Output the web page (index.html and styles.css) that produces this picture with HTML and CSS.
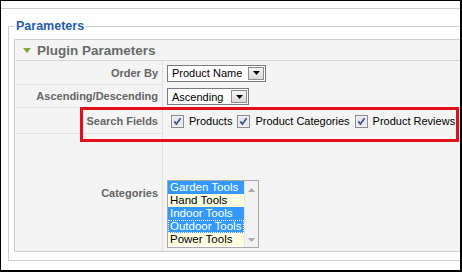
FILE: index.html
```html
<!DOCTYPE html>
<html>
<head>
<meta charset="utf-8">
<link rel="stylesheet" href="styles.css">
</head>
<body>
<div class="frame">
  <div class="topline"></div>
  <fieldset class="params">
    <legend>Parameters</legend>
    <div class="panel">
      <h3 class="panel-title"><span class="arrow"></span>Plugin Parameters</h3>
      <div class="paramlist">
        <div class="key k1">Order By</div>
        <div class="val">
          <div class="select sel-order">
            <span class="sel-text">Product Name</span>
            <span class="sel-btn"><svg width="7" height="4" viewBox="0 0 7 4"><path d="M0 0H7L3.5 4Z" fill="#000"/></svg></span>
          </div>
        </div>
        <div class="key k2">Ascending/Descending</div>
        <div class="val">
          <div class="select sel-dir">
            <span class="sel-text">Ascending</span>
            <span class="sel-btn"><svg width="7" height="4" viewBox="0 0 7 4"><path d="M0 0H7L3.5 4Z" fill="#000"/></svg></span>
          </div>
        </div>
        <div class="key k3">Search Fields</div>
        <div class="val checks">
          <label class="check"><svg class="cb" width="13" height="13" viewBox="0 0 13 13"><rect x="0.5" y="0.5" width="12" height="12" fill="#f2f2f2" stroke="#8b8b8b"/><rect x="2" y="2" width="9" height="9" fill="#e6e9ee"/><path d="M3.3 6.4L5.4 9L9.6 3.2" fill="none" stroke="#43558c" stroke-width="1.7"/></svg><span>Products</span></label>
          <label class="check"><svg class="cb" width="13" height="13" viewBox="0 0 13 13"><rect x="0.5" y="0.5" width="12" height="12" fill="#f2f2f2" stroke="#8b8b8b"/><rect x="2" y="2" width="9" height="9" fill="#e6e9ee"/><path d="M3.3 6.4L5.4 9L9.6 3.2" fill="none" stroke="#43558c" stroke-width="1.7"/></svg><span>Product Categories</span></label>
          <label class="check"><svg class="cb" width="13" height="13" viewBox="0 0 13 13"><rect x="0.5" y="0.5" width="12" height="12" fill="#f2f2f2" stroke="#8b8b8b"/><rect x="2" y="2" width="9" height="9" fill="#e6e9ee"/><path d="M3.3 6.4L5.4 9L9.6 3.2" fill="none" stroke="#43558c" stroke-width="1.7"/></svg><span>Product Reviews</span></label>
        </div>
        <div class="key k4">Categories</div>
        <div class="val list-cell">
          <div class="listbox">
            <ul class="options">
              <li class="sel">Garden Tools</li>
              <li>Hand Tools</li>
              <li class="sel">Indoor Tools</li>
              <li class="sel focus">Outdoor Tools</li>
              <li>Power Tools</li>
            </ul>
            <div class="scrollbar">
              <svg width="7" height="4" viewBox="0 0 7 4"><path d="M0 4H7L3.5 0Z" fill="#a8a8a8"/></svg>
              <svg width="7" height="4" viewBox="0 0 7 4"><path d="M0 0H7L3.5 4Z" fill="#a8a8a8"/></svg>
            </div>
          </div>
        </div>
      </div>
    </div>
  </fieldset>
  <div class="highlight"></div>
</div>
</body>
</html>
```
FILE: styles.css
```css
html, body {
  margin: 0;
  padding: 0;
  background: #ffffff;
}
.frame {
  position: relative;
  width: 462px;
  height: 272px;
  box-sizing: border-box;
  border-style: solid;
  border-color: #000;
  border-width: 1px 2px 2px 1px;
  overflow: hidden;
  background: #fff;
  font-family: "Liberation Sans", Arial, sans-serif;
}
.topline {
  height: 1px;
  margin-top: 7px;
  background: #cfcfcf;
}
.params {
  margin: 10px 0 0 7px;
  padding: 5px 0 8px 5px;
  border: 1px solid #cfcfcf;
  border-right: none;
  width: 520px;
  box-sizing: border-box;
  min-width: 0;
}
.params legend {
  padding: 0 2px;
  font-size: 12.5px;
  line-height: 15px;
  font-weight: bold;
  color: #1f5db3;
}
.panel {
  border: 1px solid #cfcfcf;
  border-right: none;
  background: #f4f4f4;
}
.panel-title {
  margin: 0;
  height: 20px;
  border-bottom: 1px solid #d6d6d6;
  display: flex;
  align-items: center;
  font-size: 13.5px;
  font-weight: bold;
  color: #6a6a6a;
}
.arrow {
  width: 0;
  height: 0;
  margin: 1px 6px 0 8px;
  border-left: 4px solid transparent;
  border-right: 4px solid transparent;
  border-top: 5px solid #7aa845;
}
.paramlist {
  display: grid;
  grid-template-columns: 148px 1fr;
  grid-template-rows: 24px 23px 26px 117px;
}
.key {
  box-sizing: border-box;
  border-right: 1px solid #e2e2e2;
  border-bottom: 1px solid #e2e2e2;
  display: flex;
  align-items: center;
  justify-content: flex-end;
  padding-right: 4px;
  font-size: 11px;
  font-weight: bold;
  color: #666;
}
.key.k4 {
  border-bottom: none;
}
.val {
  display: flex;
  align-items: center;
  padding-left: 4px;
}
.select {
  box-sizing: border-box;
  height: 17px;
  border: 1px solid #7a7a7a;
  background: #fff;
  display: flex;
  align-items: center;
  justify-content: space-between;
  padding: 0 1px 0 4px;
  font-size: 11px;
  color: #000;
}
.sel-order { width: 99px; }
.sel-dir { width: 82px; }
.sel-btn {
  box-sizing: border-box;
  width: 16px;
  height: 13px;
  border: 1px solid #8c8c8c;
  background: linear-gradient(#f4f4f4, #dcdcdc);
  display: flex;
  align-items: center;
  justify-content: center;
}
.checks {
  padding-left: 8px;
  gap: 5px;
  font-size: 11px;
  color: #000;
}
.check {
  display: flex;
  align-items: center;
  gap: 5px;
}
.cb {
  display: block;
}
.list-cell {
  align-items: flex-end;
  padding-bottom: 3px;
}
.listbox {
  box-sizing: border-box;
  width: 92px;
  height: 68px;
  border: 1px solid #a9a9a9;
  background: #fff;
  display: flex;
}
.options {
  list-style: none;
  margin: 0;
  padding: 0;
  width: 76px;
  font-size: 11.5px;
}
.options li {
  height: 13px;
  line-height: 13px;
  padding-left: 2px;
  background: #fffde0;
  color: #000;
  white-space: nowrap;
  overflow: hidden;
}
.options li.sel {
  background: #3399ff;
  color: #fff;
}
.options li.focus {
  outline: 1px dotted #fff6c8;
  outline-offset: -1px;
}
.scrollbar {
  flex: 1;
  background: #f2f2f2;
  border-left: 1px solid #e6e6e6;
  display: flex;
  flex-direction: column;
  justify-content: space-between;
  align-items: center;
  padding: 7px 0 5px;
}
.highlight {
  position: absolute;
  left: 79px;
  top: 106px;
  width: 379px;
  height: 35px;
  box-sizing: border-box;
  border: 3px solid #e3101b;
}
```
